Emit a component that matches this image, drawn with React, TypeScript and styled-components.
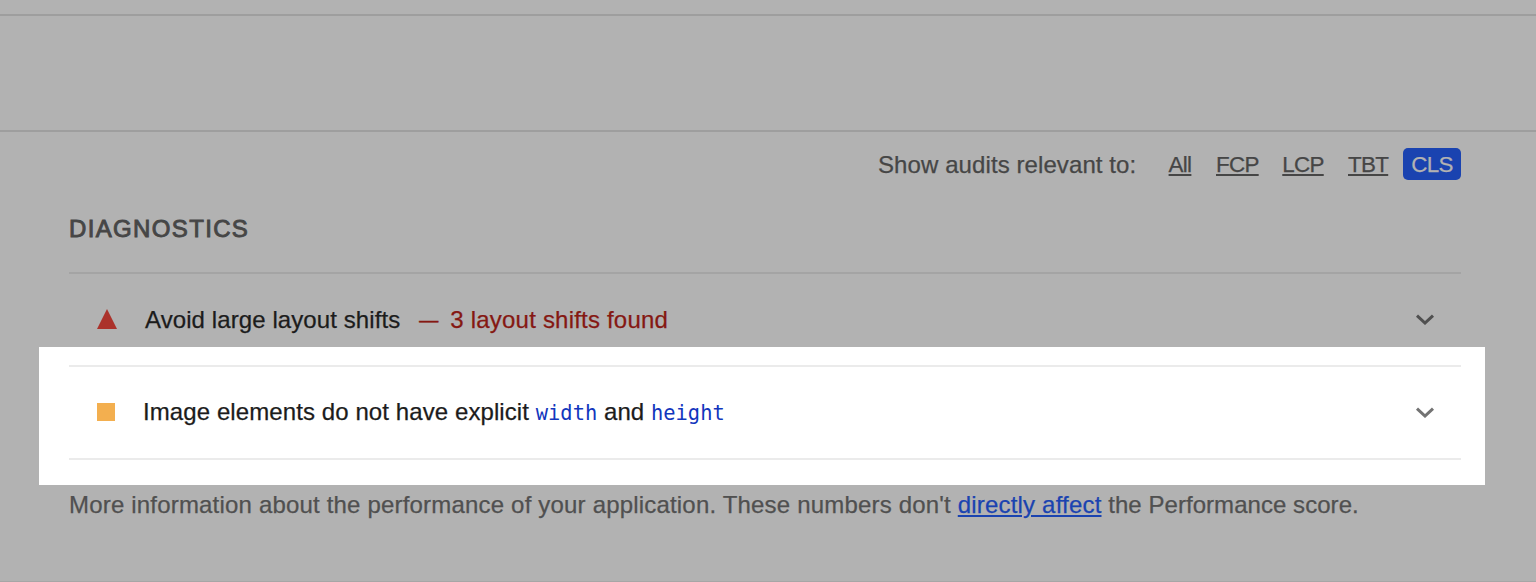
import React from 'react';
import styled, { createGlobalStyle } from 'styled-components';

const Global = createGlobalStyle`
  * { box-sizing: border-box; }
  body { margin: 0; background: #b2b2b2; overflow: hidden; }
`;
const Page = styled.main`
  height: 582px;
  display: flex;
  flex-direction: column;
  background: #b2b2b2;
  font: 24px/32px "Liberation Sans", Arial, sans-serif;
  letter-spacing: 0.09px;
  -webkit-text-stroke: 0.25px currentColor;
  color: #171717;
  white-space: nowrap;
  overflow: hidden;
  border-bottom: 1px solid #a6a6a6;
`;
const Band = styled.header`
  margin-top: 14px;
  height: 118px;
  flex: none;
  border-top: 2px solid #9e9e9e;
  border-bottom: 2px solid #9e9e9e;
`;
const Filter = styled.nav`
  display: flex;
  height: 32px;
  margin: 16px 75px 0 878px;
  color: #464646;
`;
const FilterLabel = styled.span`
  width: 258px;
  line-height: 34px;
`;
const FilterLink = styled.a<{ $active?: boolean; $w: number; $ml: number }>`
  width: ${p => p.$w}px;
  margin-left: ${p => p.$ml}px;
  text-align: center;
  font-size: 22.4px;
  line-height: 33px;
  letter-spacing: -0.7px;
  text-decoration: ${p => (p.$active ? 'none' : 'underline')};
  text-decoration-thickness: 2px;
  text-underline-offset: 2px;
  color: ${p => (p.$active ? '#b2b2b2' : '#464646')};
  background: ${p => (p.$active ? '#1a43b0' : 'transparent')};
  border-radius: 5px;
`;
const Title = styled.h2`
  margin: 33px 0 0 69px;
  height: 59px;
  font-size: 24px;
  font-weight: 400;
  line-height: 32px;
  letter-spacing: 1.35px;
  -webkit-text-stroke: 0.9px currentColor;
  color: #464646;
`;
const Audit = styled.section`
  display: flex;
  align-items: center;
  height: 75px;
  margin: 0 75px 0 69px;
  padding: 16px 26px 0 28px;
  border-top: 2px solid #a4a4a4;
`;
const Spotlight = styled.div`
  height: 138px;
  margin: 0 51px 0 39px;
  padding: 18px 24px 0 30px;
  background: #fff;
`;
const SpotAudit = styled.section`
  display: flex;
  align-items: center;
  height: 95px;
  padding: 0 26px 2px 28px;
  border-top: 2px solid #ebebeb;
  border-bottom: 2px solid #ebebeb;
`;
const Triangle = styled.svg`
  width: 20px;
  height: 20px;
  margin-right: 28px;
  fill: #ab322b;
`;
const Square = styled.i`
  width: 18px;
  height: 18px;
  margin-right: 28px;
  background: #f3af4f;
`;
const Label = styled.span<{ $top?: number }>`
  flex: 1;
  padding-top: ${p => p.$top ?? 0}px;
  color: #1c1c1c;
`;
const Fail = styled.span`
  margin-left: 19px;
  letter-spacing: 0.2px;
  color: #851812;
`;
const Dash = styled.span`
  display: inline-block;
  margin-right: 5px;
  font-size: 19px;
  line-height: 20px;
  vertical-align: 2px;
  -webkit-text-stroke-width: 0.6px;
`;
const Code = styled.code`
  font: 20.4px/20px "DejaVu Sans Mono", monospace;
  letter-spacing: 0;
  -webkit-text-stroke: 0;
  color: #1236bd;
`;
const Footer = styled.footer`
  margin: 4px 0 0 69px;
  letter-spacing: 0.185px;
  color: #505050;
`;
const FooterTail = styled.span`
  letter-spacing: 0.05px;
`;
const Link = styled.a`
  color: #1a43b0;
  text-decoration: underline;
  text-decoration-thickness: 2px;
  text-underline-offset: 2px;
`;
const ChevronIcon = styled.svg<{ $color: string }>`
  width: 20px;
  height: 12px;
  fill: none;
  stroke: ${p => p.$color};
  stroke-width: 3;
`;
const Chevron = ({ color }: { color: string }) => (
  <ChevronIcon $color={color} viewBox="0 0 20 12">
    <path d="M2 2.6 10 10 18 2.6" />
  </ChevronIcon>
);

export default function App() {
  return (
    <Page>
      <Global />
      <Band />
      <Filter>
        <FilterLabel>Show audits relevant to:</FilterLabel>
        <FilterLink $w={24} $ml={32}>All</FilterLink>
        <FilterLink $w={42} $ml={24}>FCP</FilterLink>
        <FilterLink $w={42} $ml={24}>LCP</FilterLink>
        <FilterLink $w={40} $ml={24}>TBT</FilterLink>
        <FilterLink $active $w={58} $ml={15}>CLS</FilterLink>
      </Filter>
      <Title>DIAGNOSTICS</Title>
      <Audit>
        <Triangle viewBox="0 0 20 20"><path d="M10 0 20 20H0Z" /></Triangle>
        <Label $top={2}>Avoid large layout shifts<Fail><Dash>—</Dash> 3 layout shifts found</Fail></Label>
        <Chevron color="#505050" />
      </Audit>
      <Spotlight>
        <SpotAudit>
          <Square />
          <Label>Image elements do not have explicit <Code>width</Code> and <Code>height</Code></Label>
          <Chevron color="#737373" />
        </SpotAudit>
      </Spotlight>
      <Footer>
        More information about the performance of your application. These numbers don't <Link>directly affect</Link><FooterTail> the Performance score.</FooterTail>
      </Footer>
    </Page>
  );
}
